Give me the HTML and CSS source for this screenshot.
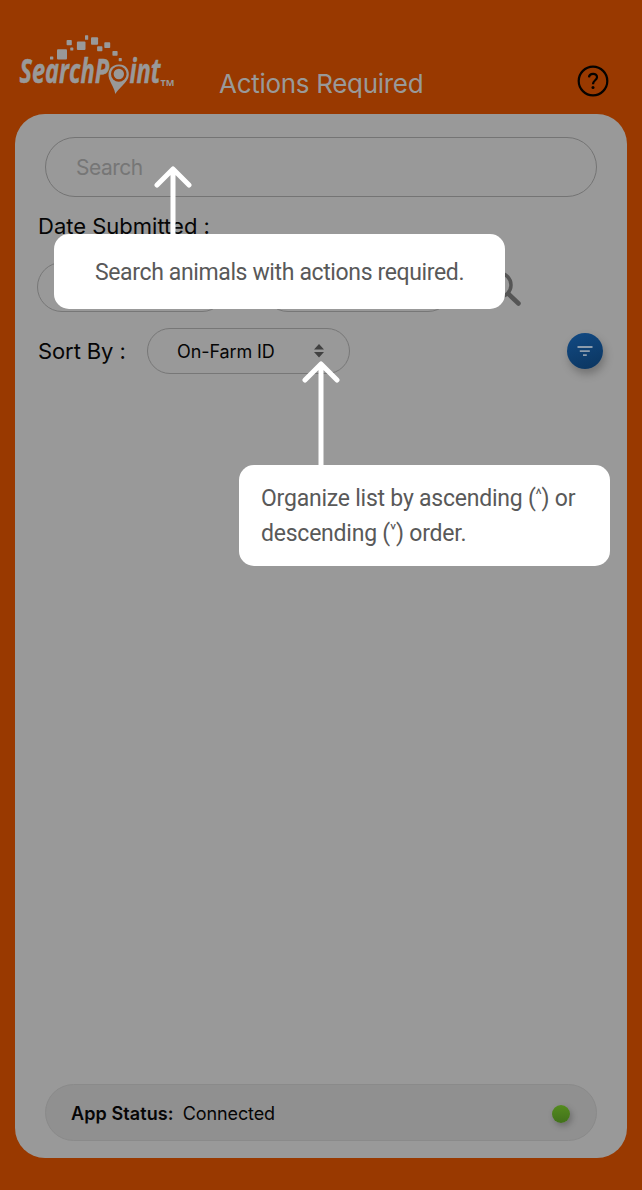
FILE: index.html
```html
<!DOCTYPE html>
<html lang="en">
<head>
<meta charset="utf-8">
<title>SearchPoint - Actions Required</title>
<link rel="stylesheet" href="styles.css">
</head>
<body>
<div class="app">
  <header class="header">
    <svg class="logo" width="160" height="66" viewBox="18 32 160 66" fill="#999">
      <g>
        <rect x="50" y="56.5" width="3.3" height="3" rx=".6"/>
        <rect x="57" y="49.3" width="10" height="10.2" rx="1"/>
        <rect x="66.6" y="40" width="5.2" height="5.2" rx=".8"/>
        <rect x="70.3" y="47.6" width="3" height="3" rx=".6"/>
        <rect x="76.9" y="41.6" width="8.6" height="8.5" rx="1"/>
        <rect x="85" y="35.2" width="3.2" height="4.6" rx=".6"/>
        <rect x="91" y="37.3" width="7.1" height="7.4" rx="1"/>
        <rect x="97.1" y="46.2" width="5.3" height="5.1" rx=".8"/>
        <rect x="104.3" y="42.3" width="5.9" height="5.8" rx=".8"/>
        <rect x="112.4" y="51" width="5.2" height="4.8" rx=".8"/>
        <rect x="118.7" y="58.1" width="3.1" height="3.1" rx=".6"/>
      </g>
      <text class="logo-word" x="19.500" y="83" textLength="89.500" lengthAdjust="spacingAndGlyphs">SearchP</text>
      <text class="logo-word" x="129.500" y="83" textLength="31" lengthAdjust="spacingAndGlyphs">int</text>
      <path d="M115.300 94C114.800 89 111 84 109.200 79C106.800 71 111 64.800 119 64.600C126.500 64.600 130.400 71 128.300 77.600C126 83.500 119 88 115.300 94Z"/>
      <circle cx="118.800" cy="74" r="7.800" fill="#993900"/>
      <circle cx="118.800" cy="74" r="5.200"/>
      <text class="logo-tm" x="160.500" y="86" textLength="14" lengthAdjust="spacingAndGlyphs">TM</text>
    </svg>
    <h1 class="title">Actions Required</h1>
    <svg class="help" width="32" height="32" viewBox="0 0 32 32" fill="none" stroke="#050301">
      <circle cx="16" cy="16" r="14.300" stroke-width="2.200"/>
      <path d="M12 12.400C12.200 7.600 20.200 7.700 20 12.200C19.900 15.300 16 15.300 16 19.300" stroke-width="2.200"/>
      <circle cx="16" cy="22.500" r="1.500" fill="#050301" stroke="none"/>
    </svg>
  </header>
  <main class="panel">
    <div class="search">Search</div>
    <div class="date-label">Date Submitted :</div>
    <div class="dates">
      <div class="date"></div>
      <div class="date"></div>
      <svg class="magnifier" width="40" height="40" viewBox="0 0 40 40" fill="none" stroke="#555" stroke-linecap="round">
        <circle cx="16" cy="16" r="12" stroke-width="3.500"/>
        <path d="M25.500 25L35.500 34.500" stroke-width="4.500"/>
      </svg>
    </div>
    <div class="sort">
      <span class="sort-label">Sort By :</span>
      <div class="select">
        <span class="select-value">On-Farm ID</span>
        <svg class="sorter" width="10" height="14" viewBox="0 0 10 14" fill="#414141"><path d="M0 5.600L5 0L10 5.600ZM0 8.100H10L5 13.500Z"/></svg>
      </div>
      <div class="filter">
        <svg width="16" height="12" viewBox="0 0 16 12" fill="#8d9cac"><path d="M.5 1H15.500V3H.5ZM2.800 5.200H12.800V7H2.800ZM6 9.300H9.800V11H6Z"/></svg>
      </div>
    </div>
    <footer class="status">
      <strong class="status-label">App Status:</strong>
      <span class="status-value">Connected</span>
      <span class="dot"></span>
    </footer>
  </main>
  <div class="callout callout-search">
    <svg class="arrow arrow-search" width="38" height="70" viewBox="0 0 38 70"><path d="M19 70V4M3 19L19 3L35 19"/></svg>
    Search animals with actions required.
  </div>
  <div class="callout callout-sort">
    <svg class="arrow arrow-sort" width="38" height="106" viewBox="0 0 38 106"><path d="M19 106V4M3 19L19 3L35 19"/></svg>
    Organize list by ascending (<span class="caret">^</span>) or<br>descending (<span class="caret caret-down">^</span>) order.
  </div>
</div>
</body>
</html>
```
FILE: styles.css
```css
* { box-sizing: border-box; }
body { margin: 0; background: #993900; font-family: Inter, "Liberation Sans", sans-serif; color: #060606; }
.app { position: relative; height: 1190px; padding: 0 15px 32px; display: flex; flex-direction: column; overflow: hidden; }
.header { height: 114px; flex: none; display: flex; align-items: flex-start; }
.logo { margin: 32px 0 0 3px; flex: none; }
.logo-word { font: italic 700 34.500px "Open Sans", "Noto Sans", sans-serif; stroke: #999; stroke-width: .5px; }
.logo-tm { font: 700 8.500px "Open Sans", sans-serif; }
.title { margin: 67px 0 0 41px; font-size: 26px; line-height: 33px; font-weight: 400; color: #999; white-space: nowrap; letter-spacing: -.3px; }
.help { margin: 65px 18px 0 auto; }
.panel { flex: 1; background: #999; border-radius: 30px; padding: 23px 30px 17px; display: flex; flex-direction: column; }
.search { height: 60px; flex: none; border: 1px solid #747474; border-radius: 30px; padding: 0 30px; font-size: 21px; line-height: 59px; letter-spacing: -.5px; color: #767676; }
.date-label { margin: 16px 0 1px -7px; font-size: 22px; line-height: 26px; }
.dates { height: 50px; margin: 22px 0 0 -8px; display: flex; align-items: flex-start; }
.date { width: 190px; height: 50px; border: 1px solid #777; border-radius: 25px; margin-right: 36px; }
.magnifier { margin: 7px 0 0 -6px; }
.sort { margin: 16px -7px 0; height: 46px; display: flex; align-items: center; }
.sort-label { width: 109px; font-size: 22px; letter-spacing: -.1px; }
.select { width: 203px; height: 46px; border: 1px solid #777; border-radius: 23px; padding: 0 25px 0 29px; display: flex; align-items: center; justify-content: space-between; }
.select-value { font-size: 18px; letter-spacing: -.1px; }
.filter { width: 36px; height: 36px; margin: 0 1px 0 auto; border-radius: 50%; background: linear-gradient(160deg, #124a84, #0b355f); box-shadow: 2px 5px 8px rgba(0,0,0,.25); display: flex; align-items: center; justify-content: center; }
.status { height: 57px; margin-top: auto; border: 1px solid #8a8a8a; border-radius: 29px; background: #909090; padding: 2px 26px 0 25px; display: flex; align-items: center; font-size: 18px; }
.status-label { font-weight: 600; letter-spacing: .1px; }
.status-value { margin-left: 9px; letter-spacing: -.1px; }
.dot { width: 18px; height: 18px; margin: 1px 0 0 auto; border-radius: 50%; background: linear-gradient(#548b1e, #41711a); box-shadow: 2px 3px 6px rgba(0,0,0,.25); }
.callout { position: absolute; background: #fff; border-radius: 15px; color: #595959; font-family: Roboto, sans-serif; font-size: 23px; white-space: nowrap; }
.callout-search { left: 54px; top: 234px; width: 451px; height: 75px; padding-left: 41px; line-height: 77px; letter-spacing: -.37px; }
.callout-sort { left: 239px; top: 465px; width: 371px; height: 101px; padding: 16px 0 0 22px; line-height: 35px; letter-spacing: -.23px; }
.arrow { position: absolute; fill: none; stroke: #fff; stroke-width: 5; stroke-linecap: round; stroke-linejoin: round; }
.arrow-search { left: 100px; top: -68px; }
.arrow-sort { left: 63px; top: -104px; }
.caret { display: inline-block; font-size: 15px; line-height: 10px; transform: translateY(-7px); }
.caret-down { transform: translateY(-12px) scaleY(-1); }
```
